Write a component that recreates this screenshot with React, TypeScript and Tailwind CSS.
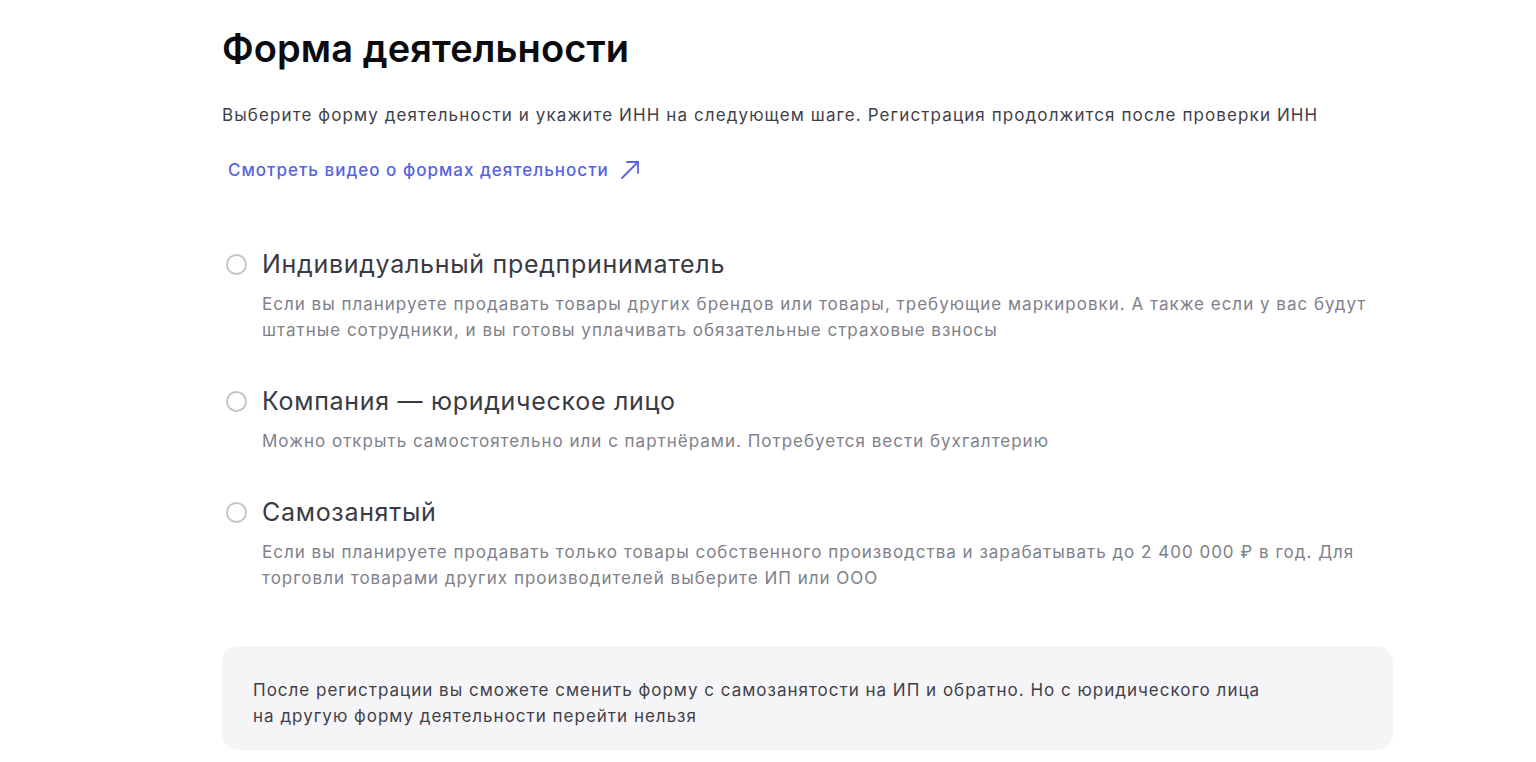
const options = [
  {
    title: 'Индивидуальный предприниматель',
    text: 'Если вы планируете продавать товары других брендов или товары, требующие маркировки. А также если у вас будут штатные сотрудники, и вы готовы уплачивать обязательные страховые взносы',
  },
  {
    title: 'Компания — юридическое лицо',
    text: 'Можно открыть самостоятельно или с партнёрами. Потребуется вести бухгалтерию',
  },
  {
    title: 'Самозанятый',
    text: 'Если вы планируете продавать только товары собственного производства и зарабатывать до 2 400 000 ₽ в год. Для торговли товарами других производителей выберите ИП или ООО',
  },
];

export default function App() {
  return (
    <div className="min-h-screen bg-white font-['Inter',sans-serif] pl-[222px] pt-[24px]">
      <div className="w-[1171px]">
        {/* Header */}
        <h1 className="text-[38px] leading-[48px] font-semibold text-[#0b0b0f] tracking-[0.1px]">
          Форма деятельности
        </h1>
        <p className="mt-[31px] text-[17px] leading-[24px] text-[#3f3f4a] tracking-[1.1px]">
          Выберите форму деятельности и укажите ИНН на следующем шаге. Регистрация продолжится после проверки ИНН
        </p>
        <a className="mt-[31px] ml-[6px] inline-flex items-center gap-[11px] text-[17px] leading-[24px] text-[#5763e6] font-medium tracking-[1px] cursor-pointer">
          Смотреть видео о формах деятельности
          <svg width="20" height="20" viewBox="0 0 20 20" fill="none" stroke="currentColor" strokeWidth="1.8" strokeLinecap="round" strokeLinejoin="round">
            <path d="M2 18 L18 2" />
            <path d="M7 2 H18 V13" />
          </svg>
        </a>

        {/* Options */}
        <div className="mt-[65px] flex flex-col gap-[41px]">
          {options.map((o) => (
            <label key={o.title} className="flex flex-col cursor-pointer">
              <div className="flex items-center gap-[15px] ml-[4px]">
                <span className="w-[21px] h-[21px] rounded-full border-2 border-[#c5c5cd] shrink-0" />
                <span className="text-[25px] leading-[34px] text-[#3a3a44] tracking-[0.7px]">{o.title}</span>
              </div>
              <p className="ml-[40px] mt-[10px] text-[17px] leading-[26px] text-[#80808b] tracking-[1px]">{o.text}</p>
            </label>
          ))}
        </div>

        {/* Notice */}
        <div className="mt-[55px] rounded-[16px] bg-[#f5f5f7] px-[31px] pt-[31px] pb-[21px]">
          <p className="text-[17px] leading-[26px] text-[#3f3f4a] tracking-[1px]">
            После регистрации вы сможете сменить форму с самозанятости на ИП и обратно. Но с юридического лица
            <br />
            на другую форму деятельности перейти нельзя
          </p>
        </div>
      </div>
    </div>
  );
}
